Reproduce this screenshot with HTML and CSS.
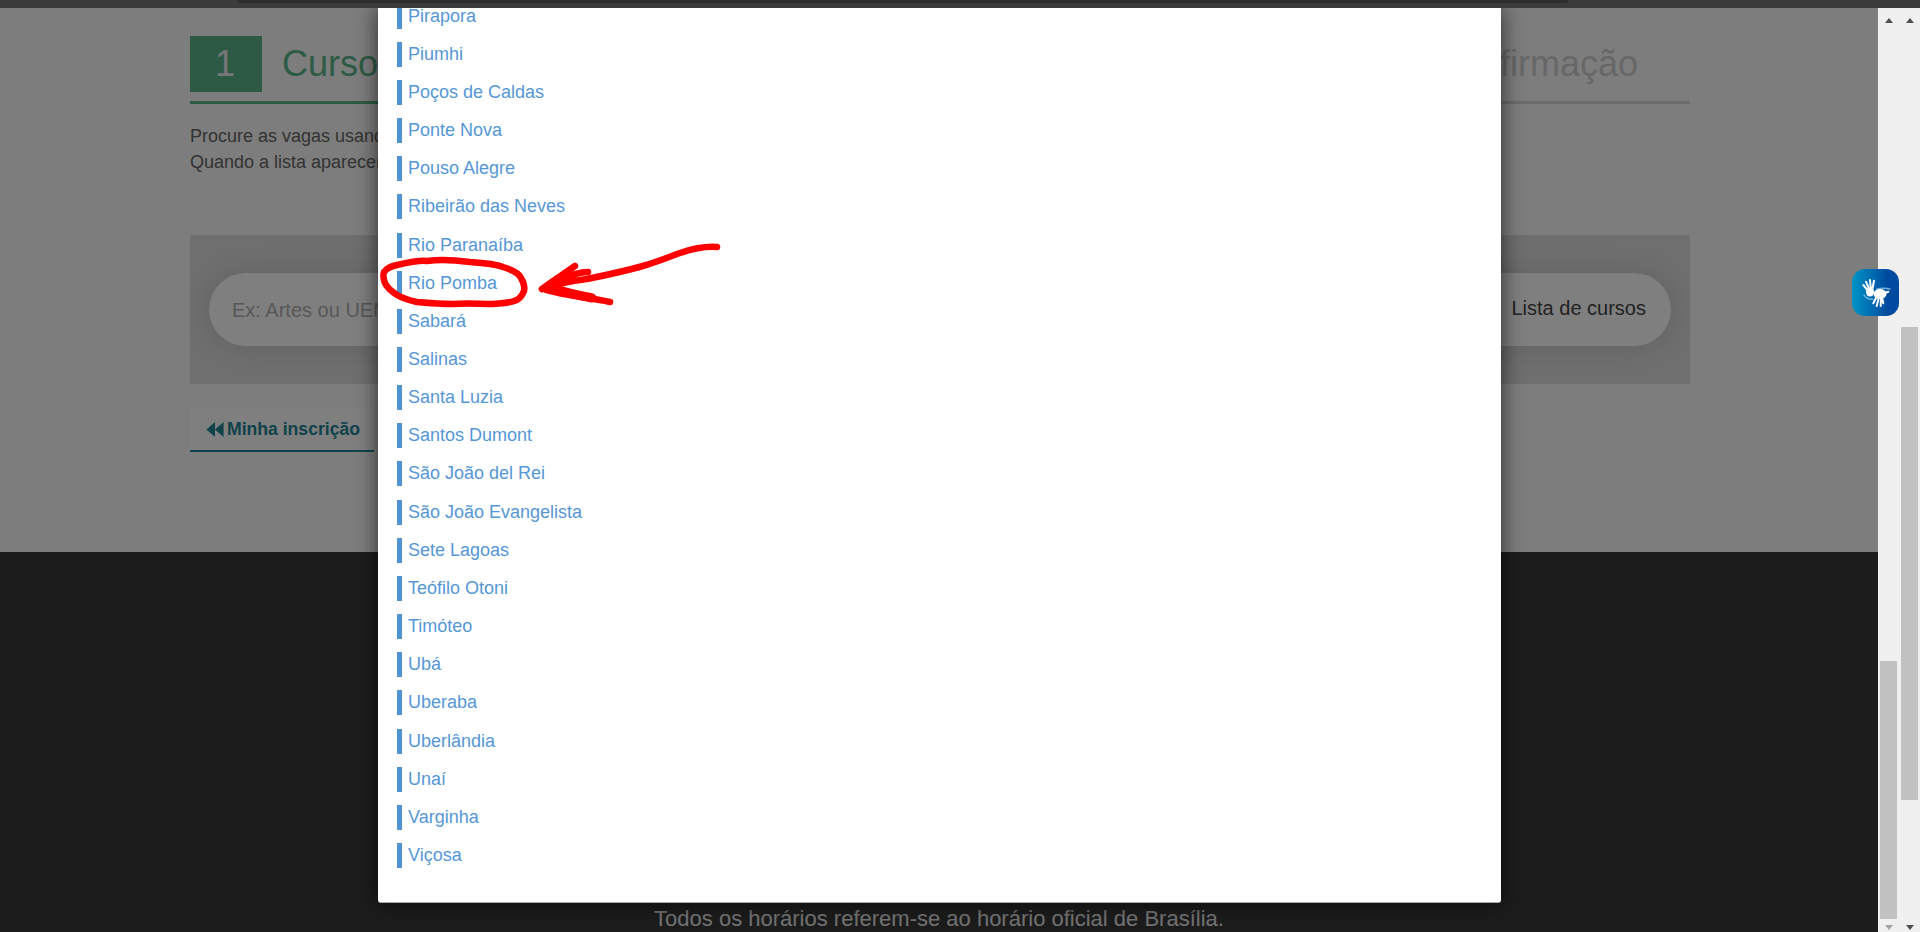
FILE: index.html
```html
<!DOCTYPE html>
<html lang="pt-BR">
<head>
<meta charset="utf-8">
<title>Inscrição</title>
<link rel="stylesheet" href="styles.css">
</head>
<body>
<div class="topbar"><div class="topbar-notch"></div></div>
<div class="window">
  <main class="stage">
    <div class="page">
      <div class="content">
        <div class="steps">
          <div class="step step-active"><span class="step-num">1</span><span class="step-label">Curso</span></div>
          <div class="step step-last"><span class="step-label">Confirmação</span></div>
        </div>
        <p class="intro"><span class="intro-line">Procure as vagas usando</span><br><span class="intro-line">Quando a lista aparecer</span></p>
        <div class="search-panel">
          <div class="search-pill">
            <span class="placeholder">Ex: Artes ou UEMG</span>
            <span class="search-btn">Lista de cursos</span>
          </div>
        </div>
        <a class="tab"><svg class="tab-icon" viewBox="0 0 16 14"><path d="M8 0v14L0 7zM16 0v14L8 7z"/></svg>Minha inscrição</a>
      </div>
    </div>
    <footer class="footer"><p class="footer-note">Todos os horários referem-se ao horário oficial de Brasília.</p></footer>
    <div class="overlay"></div>
    <div class="modal">
      <ul class="cities">
        <li>Pirapora</li>
        <li>Piumhi</li>
        <li>Poços de Caldas</li>
        <li>Ponte Nova</li>
        <li>Pouso Alegre</li>
        <li>Ribeirão das Neves</li>
        <li>Rio Paranaíba</li>
        <li>Rio Pomba</li>
        <li>Sabará</li>
        <li>Salinas</li>
        <li>Santa Luzia</li>
        <li>Santos Dumont</li>
        <li>São João del Rei</li>
        <li>São João Evangelista</li>
        <li>Sete Lagoas</li>
        <li>Teófilo Otoni</li>
        <li>Timóteo</li>
        <li>Ubá</li>
        <li>Uberaba</li>
        <li>Uberlândia</li>
        <li>Unaí</li>
        <li>Varginha</li>
        <li>Viçosa</li>
      </ul>
    </div>
  </main>
  <div class="scrollbar">
    <span class="arrow arrow-up"></span>
    <div class="track"><div class="thumb thumb-inner"></div></div>
    <span class="arrow arrow-down arrow-off"></span>
  </div>
  <div class="scrollbar">
    <span class="arrow arrow-up"></span>
    <div class="track"><div class="thumb thumb-outer"></div></div>
    <span class="arrow arrow-down"></span>
  </div>
</div>
<div class="vlibras">
  <svg viewBox="0 0 47 47" class="vlibras-hands">
    <path class="hand-back" d="M12 26c2 3 6 5 9 4M25 20c4-1 9-1 13 0"/>
    <ellipse class="palm" cx="18" cy="23" rx="4" ry="4.5"/>
    <path class="hand" d="M17 23 11.3 16M18 22 14 12.7M19 22 18 11M20 22 22 11.7"/>
    <ellipse class="palm" cx="28" cy="25" rx="6.5" ry="5"/>
    <path class="hand" d="M30 25 36.3 22.7M25 27 21.3 34.3M27 28 24.7 37M29 28 28.7 37M30 28 31.3 34.3"/>
  </svg>
</div>
<svg class="marks" viewBox="0 0 1920 932">
  <path class="mark" d="M397 265C410 262 420 260 427 261C440 259 455 260 470 262C485 263 495 264 503 267C513 270 519 273 521 278C524 283 525 287 524 291C522 296 519 300 514 301C506 304 498 303 493 304C480 304 466 303 453 304C440 304 428 303 417 302C408 300 402 298 397 295C391 291 387 288 385 283C383 278 383 275 384 272C387 268 392 266 397 265"/>
  <path class="mark" d="M542 289C556 284 571 281 587 279C607 275 625 271 643 266C657 262 669 257 680 253C692 249 704 246 717 247"/>
  <path class="mark" d="M542 289C552 281 564 274 575 266"/>
  <path class="mark" d="M558 280C568 276 578 272 588 272"/>
  <path class="mark" d="M546 290C566 296 586 297 610 302"/>
  <path class="mark-thick" d="M553 288C566 293 578 295 592 298"/>
  <path class="mark-thick" d="M552 285C560 282 566 279 572 276"/>
</svg>
</body>
</html>
```
FILE: styles.css
```css
* { box-sizing: border-box; }
html, body { margin: 0; height: 100%; }
body {
  position: relative;
  height: 932px;
  overflow: hidden;
  display: flex;
  flex-direction: column;
  font-family: "Liberation Sans", Arial, sans-serif;
  background: #f0f0f0;
}
.topbar {
  height: 8px;
  flex: none;
  padding-left: 238px;
  background: #3b3b3b;
}
.topbar-notch {
  width: 1330px;
  height: 3px;
  background: #2d2d2d;
  border-radius: 0 0 4px 4px;
}
.window {
  flex: 1;
  display: flex;
  min-height: 0;
}
.stage {
  position: relative;
  flex: 1;
  min-width: 0;
  overflow: hidden;
  display: flex;
  flex-direction: column;
}
.page {
  height: 544px;
  flex: none;
  background: #fbfbfb;
  padding: 28px 0 0 190px;
}
.content { width: 1500px; }
.steps {
  display: flex;
  justify-content: space-between;
  padding-bottom: 9px;
  border-bottom: 3px solid #d9d9d9;
  position: relative;
}
.step { display: flex; align-items: center; height: 56px; gap: 20px; }
.step-last { padding-right: 52px; }
.step-num {
  width: 72px;
  height: 56px;
  padding-right: 2px;
  background: #58b58b;
  color: #eee;
  font-size: 36px;
  display: flex;
  align-items: center;
  justify-content: center;
}
.step-label { font-size: 36px; color: #cfcfcf; }
.step-active .step-label { color: #5db68b; }
.step-active::after {
  content: "";
  position: absolute;
  left: 0;
  bottom: -3px;
  width: 400px;
  height: 3px;
  background: #58b58b;
}
.intro {
  margin: 19px 0 60px;
  font-size: 18px;
  line-height: 26px;
  color: #666;
}
.search-panel {
  height: 149px;
  padding: 38px 19px;
  background: #dedede;
}
.search-pill {
  height: 73px;
  border-radius: 37px;
  background: #fff;
  box-shadow: 0 0 30px rgba(0, 0, 0, .12);
  display: flex;
  align-items: center;
  justify-content: space-between;
  padding: 0 25px 0 23px;
  font-size: 20px;
}
.placeholder { color: #b0b0b0; padding-top: 2px; }
.search-btn { color: #444; padding-bottom: 3px; }
.tab {
  display: inline-flex;
  align-items: center;
  gap: 3px;
  width: 184px;
  height: 44px;
  margin-top: 24px;
  padding: 1px 0 0 16px;
  background: #fff;
  border-bottom: 2px solid #1f8a99;
  color: #1e8494;
  font-size: 17.6px;
  font-weight: 700;
}
.tab-icon { width: 18px; height: 15px; fill: #1e8494; }
.footer {
  flex: 1;
  background: #383838;
  display: flex;
  flex-direction: column;
  justify-content: flex-end;
  align-items: center;
}
.footer-note {
  margin: 0 0 1px;
  font-size: 22px;
  line-height: 24px;
  color: #e6e6e6;
}
.overlay {
  position: absolute;
  inset: 0;
  background: rgba(0, 0, 0, .5);
}
.modal {
  position: absolute;
  top: 0;
  left: 378px;
  width: 1123px;
  height: 895px;
  overflow: hidden;
  background: #fff;
  border-radius: 0 0 3px 3px;
  box-shadow: 0 0 22px rgba(0, 0, 0, .65);
  border-bottom: 1px solid #aaa;
}
.cities {
  list-style: none;
  margin: -4.4px 0 0;
  padding: 0 0 0 19px;
}
.cities li {
  height: 25px;
  margin-bottom: 13.17px;
  padding-left: 6px;
  border-left: 5px solid #4f93d3;
  color: #5597d6;
  font-size: 18px;
  line-height: 24px;
}
.scrollbar {
  width: 21px;
  flex: none;
  display: flex;
  flex-direction: column;
  align-items: center;
  background: #f0f0f0;
}
.track { flex: 1; width: 100%; padding: 0 2px; }
.thumb { background: #c1c1c1; }
.thumb-inner { margin-top: 638px; height: 258px; }
.thumb-outer { margin-top: 304px; height: 473px; }
.arrow { width: 0; height: 0; border-left: 4.5px solid transparent; border-right: 4.5px solid transparent; flex: none; }
.arrow-up { margin-top: 10px; border-bottom: 5px solid #505050; }
.arrow-down { margin-bottom: 2px; border-top: 5px solid #505050; }
.arrow-off { border-top-color: #a3a3a3; }
.vlibras {
  position: absolute;
  left: 1852px;
  top: 269px;
  width: 47px;
  height: 47px;
  border-radius: 13px;
  background: linear-gradient(90deg, #0095c6 0%, #004b9f 75%);
}
.vlibras-hands { display: block; width: 47px; height: 47px; }
.hand { fill: none; stroke: #fff; stroke-width: 2; stroke-linecap: round; }
.hand-back { fill: none; stroke: #6fb0dc; stroke-width: 1.4; stroke-linecap: round; }
.palm { fill: #fff; }
.marks {
  position: absolute;
  inset: 0;
  width: 1920px;
  height: 932px;
  pointer-events: none;
}
.mark { fill: none; stroke: #fe0000; stroke-width: 6.5; stroke-linecap: round; stroke-linejoin: round; }
.mark-thick { fill: none; stroke: #fe0000; stroke-width: 9; stroke-linecap: round; }
```
